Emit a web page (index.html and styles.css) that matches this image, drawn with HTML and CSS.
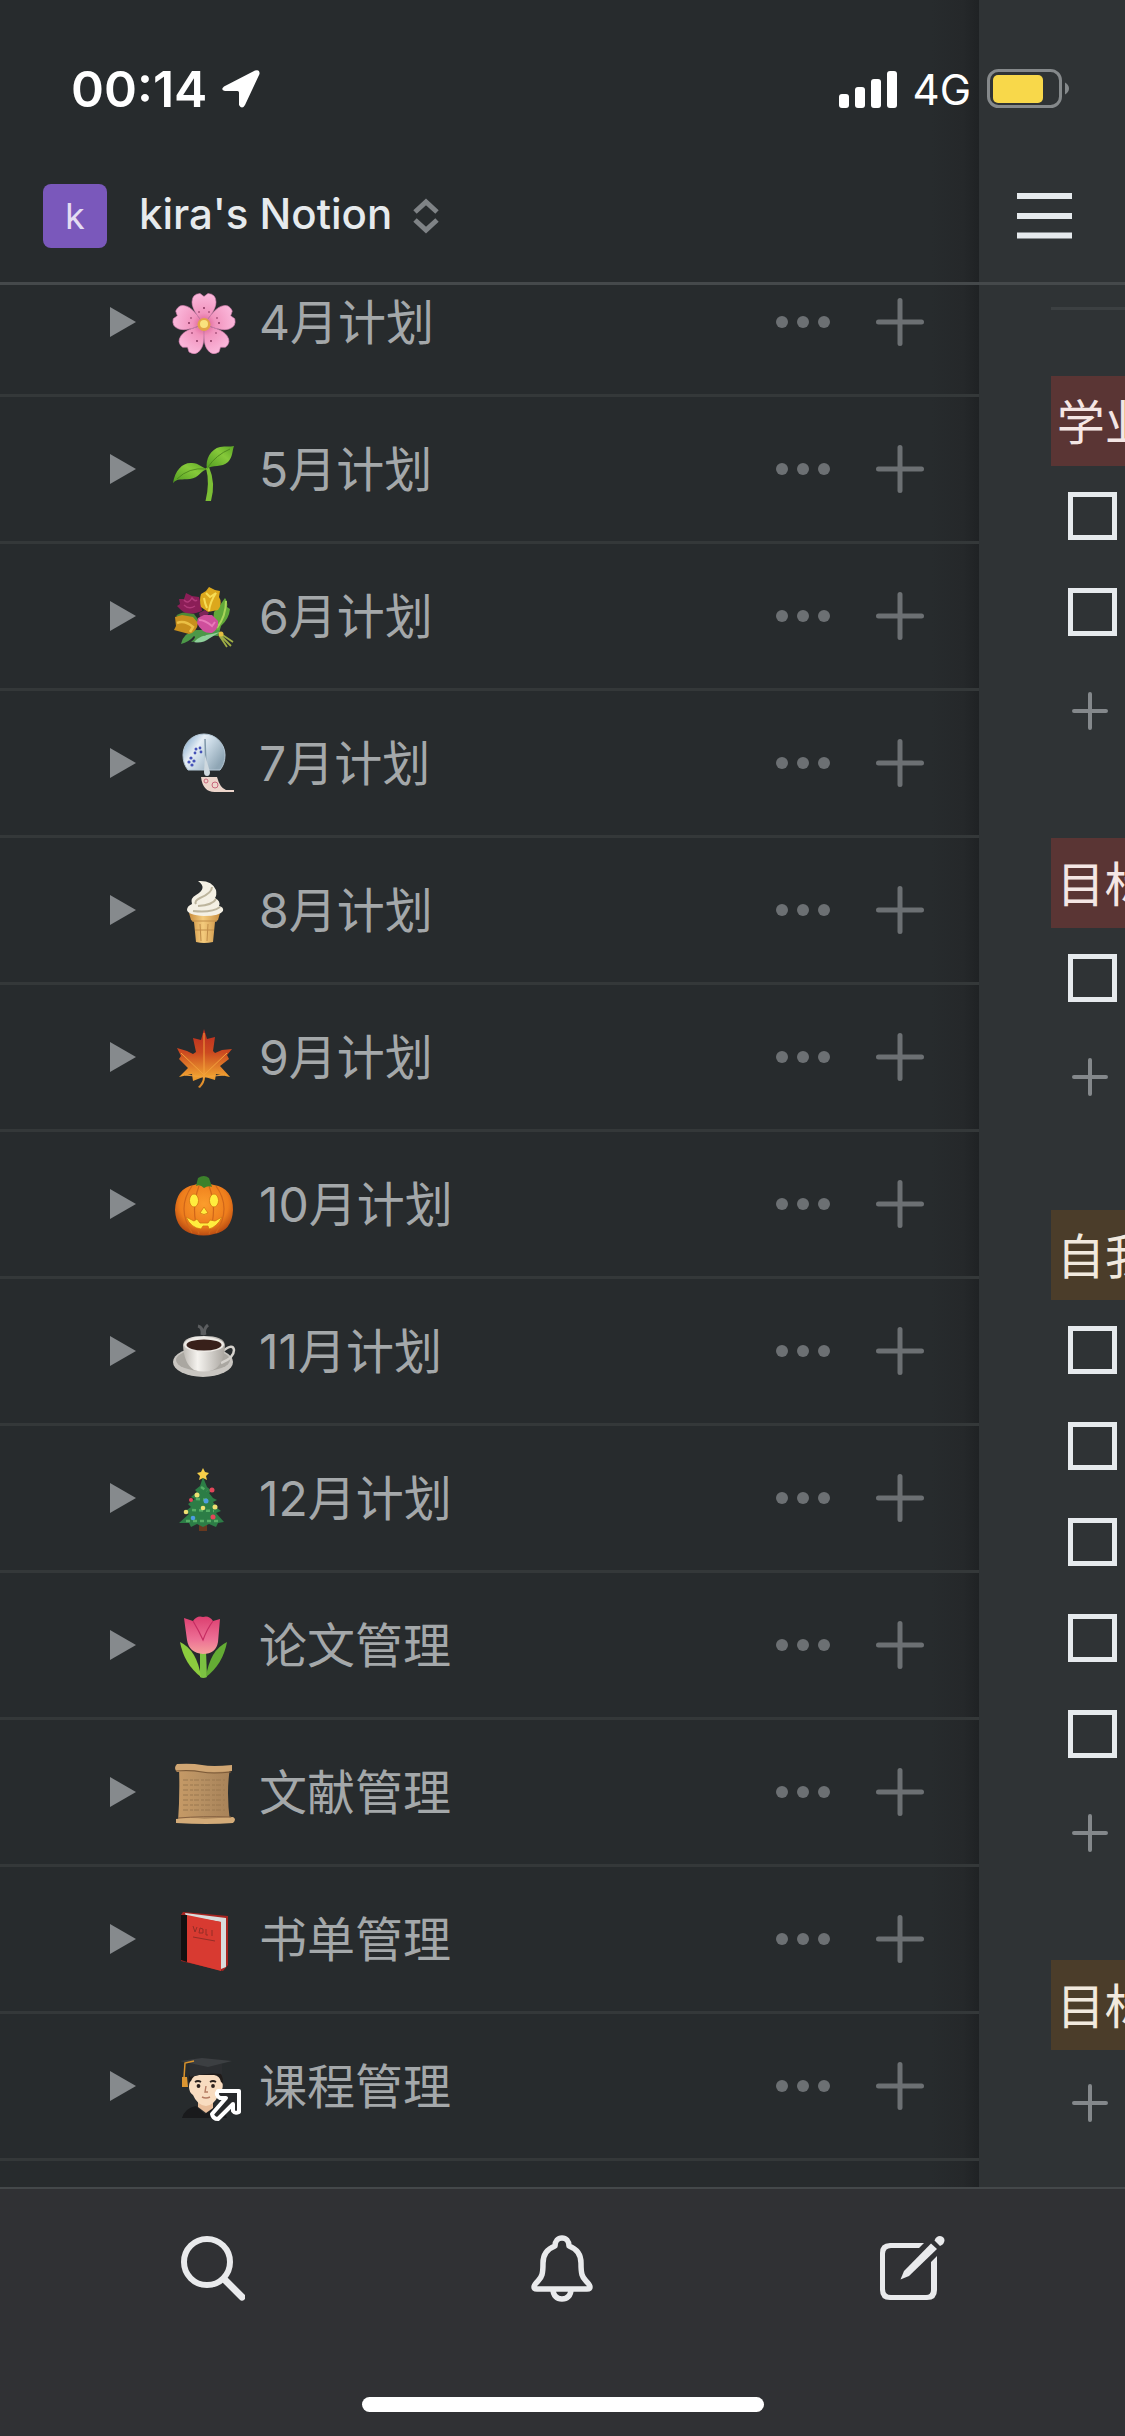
FILE: index.html
```html
<!DOCTYPE html>
<html lang="zh-CN">
<head>
<meta charset="utf-8">
<meta name="viewport" content="width=device-width, initial-scale=1">
<title>kira's Notion</title>
<link rel="stylesheet" href="styles.css">
</head>
<body>
<svg class="defs" aria-hidden="true">
  <defs>
    <symbol id="caret" viewBox="0 0 26 30"><path d="M0 0 26 15 0 30z" fill="#868a8d"/></symbol>
    <symbol id="dots" viewBox="0 0 54 14"><g fill="#6c7073"><circle cx="6" cy="7" r="6"/><circle cx="27" cy="7" r="6"/><circle cx="48" cy="7" r="6"/></g></symbol>
    <symbol id="plus" viewBox="0 0 48 48"><path d="M24 2.500V45.500M2.500 24H45.500" stroke="#6c7073" stroke-width="5" stroke-linecap="round"/></symbol>
    <symbol id="plus-small" viewBox="0 0 36 38"><path d="M18 2V36M2 19H34" stroke="#84888b" stroke-width="4" stroke-linecap="round"/></symbol>
    <radialGradient id="g-petal" gradientUnits="userSpaceOnUse" cx="32" cy="34" r="31"><stop offset="0" stop-color="#d8588f"/><stop offset=".35" stop-color="#f193bd"/><stop offset="1" stop-color="#fbb9dc"/></radialGradient>
    <linearGradient id="g-leaf" x1="0" y1="1" x2="1" y2="0"><stop offset="0" stop-color="#4f9a20"/><stop offset=".6" stop-color="#86c93a"/><stop offset="1" stop-color="#5aa524"/></linearGradient>
    <linearGradient id="g-maple" x1="0" y1="0" x2="0" y2="1"><stop offset="0" stop-color="#b8281f"/><stop offset=".4" stop-color="#cc4a20"/><stop offset=".8" stop-color="#efa030"/><stop offset="1" stop-color="#d9852a"/></linearGradient>
    <linearGradient id="g-dome" x1="0" y1="0" x2="1" y2=".6"><stop offset="0" stop-color="#6e9cc4"/><stop offset=".4" stop-color="#e6eef5"/><stop offset=".6" stop-color="#c8d8e4"/><stop offset="1" stop-color="#8fa6b5"/></linearGradient>
    <linearGradient id="g-cone" x1="0" x2="1"><stop offset="0" stop-color="#c88c3d"/><stop offset=".45" stop-color="#f4cb7d"/><stop offset="1" stop-color="#c98f42"/></linearGradient>
    <radialGradient id="g-pumpkin" cx=".5" cy=".4" r=".6"><stop offset="0" stop-color="#fb9d2c"/><stop offset=".7" stop-color="#ee7d1c"/><stop offset="1" stop-color="#b94c12"/></radialGradient>
    <linearGradient id="g-cup" x1="0" x2="1"><stop offset="0" stop-color="#bdb9b3"/><stop offset=".35" stop-color="#f5f3ef"/><stop offset="1" stop-color="#a9a59f"/></linearGradient>
    <linearGradient id="g-tulip" x1="0" y1="0" x2="0" y2="1"><stop offset="0" stop-color="#dc3f70"/><stop offset=".6" stop-color="#ed6f95"/><stop offset="1" stop-color="#f5a09c"/></linearGradient>
    <linearGradient id="g-scroll" x1="0" x2="1"><stop offset="0" stop-color="#c69a66"/><stop offset=".5" stop-color="#b58f62"/><stop offset="1" stop-color="#a88258"/></linearGradient>
  </defs>
</svg>

<div class="app">
  <div class="status">
    <div class="status-left">
      <span class="clock">00:14</span>
      <svg width="40" height="40" viewBox="0 0 40 40"><path d="M3 17.500 34 1.500Q39 0 38.500 5L24 36Q21 41 18 36V23.500Q18 22 16.500 22H4Q-1 21 3 17.500z" fill="#fff"/></svg>
    </div>
    <div class="status-right">
      <svg width="58" height="38" viewBox="0 0 58 38" fill="#fff"><rect y="24" width="10" height="14" rx="3"/><rect x="16" y="17" width="10" height="21" rx="3"/><rect x="32" y="9" width="10" height="29" rx="3"/><rect x="48" y="1" width="10" height="37" rx="3"/></svg>
      <span class="network">4G</span>
      <svg width="83" height="40" viewBox="0 0 83 40"><rect x="1.500" y="1.500" width="72" height="36" rx="10" fill="none" stroke="#85898b" stroke-width="3"/><rect x="6" y="6" width="50" height="28" rx="5" fill="#f8d84a"/><path d="M78 13.500Q82 16 82 19.500T78 25.500z" fill="#85898b"/></svg>
    </div>
  </div>

  <div class="panes">
    <aside class="sidebar">
      <header class="bar sidebar-bar">
        <button class="workspace" type="button">
          <span class="avatar">k</span>
          <span class="workspace-name">kira's Notion</span>
          <svg width="28" height="36" viewBox="0 0 28 36"><path d="M3 14 14 4 25 14M3 22 14 32 25 22" fill="none" stroke="#7f8386" stroke-width="5"/></svg>
        </button>
      </header>
      <ul class="pages">
        <li class="page">
          <button type="button" aria-label="展开"><svg width="26" height="30"><use href="#caret"/></svg></button>
          <a href="#apr"><svg class="emoji" viewBox="0 0 64 64">
            <g fill="url(#g-petal)" stroke="#d983b4" stroke-width=".6">
              <path d="M32 34C27 27 20 20 20 12Q20 4 28 3.500L32 6.500 36 3.500Q44 4 44 12C44 20 37 27 32 34z"/>
              <path d="M32 34C27 27 20 20 20 12Q20 4 28 3.500L32 6.500 36 3.500Q44 4 44 12C44 20 37 27 32 34z" transform="rotate(72 32 34.500)"/>
              <path d="M32 34C27 27 20 20 20 12Q20 4 28 3.500L32 6.500 36 3.500Q44 4 44 12C44 20 37 27 32 34z" transform="rotate(144 32 34.500)"/>
              <path d="M32 34C27 27 20 20 20 12Q20 4 28 3.500L32 6.500 36 3.500Q44 4 44 12C44 20 37 27 32 34z" transform="rotate(216 32 34.500)"/>
              <path d="M32 34C27 27 20 20 20 12Q20 4 28 3.500L32 6.500 36 3.500Q44 4 44 12C44 20 37 27 32 34z" transform="rotate(288 32 34.500)"/>
            </g>
            <circle cx="32" cy="34.500" r="6.500" fill="#e3a445"/><circle cx="32" cy="34" r="4" fill="#f9e27e"/>
            <g fill="#7d2a52"><circle cx="32" cy="18" r=".9"/><circle cx="27" cy="22" r=".8"/><circle cx="37" cy="22" r=".8"/><circle cx="17" cy="33" r=".9"/><circle cx="19" cy="28" r=".8"/><circle cx="47" cy="33" r=".9"/><circle cx="45" cy="28" r=".8"/><circle cx="25" cy="51" r=".9"/><circle cx="20" cy="43" r=".8"/><circle cx="39" cy="51" r=".9"/><circle cx="44" cy="43" r=".8"/></g>
          </svg><span>4月计划</span></a>
          <button type="button" aria-label="更多"><svg width="54" height="14"><use href="#dots"/></svg></button>
          <button type="button" aria-label="添加"><svg width="48" height="48"><use href="#plus"/></svg></button>
        </li>
        <li class="page">
          <button type="button" aria-label="展开"><svg width="26" height="30"><use href="#caret"/></svg></button>
          <a href="#may"><svg class="emoji" viewBox="0 0 64 64">
            <path d="M34 31Q38 46 33.500 64H39Q44 46 37 30z" fill="#7cbf35"/>
            <path d="M1 46C3 33 11 25 20 26 27 26 30 31 36 32 29 33 27 41 18 42 10 43 5 41 1 46z" fill="url(#g-leaf)"/>
            <path d="M35 32C33 22 39 12 48 10 54 9 58 10 62 9 60 14 61 20 56 25 50 31 40 27 35 32z" fill="url(#g-leaf)"/>
            <path d="M5 42Q17 30 34 32M36 30Q44 18 58 12" fill="none" stroke="#477f1b" stroke-width=".8"/>
          </svg><span>5月计划</span></a>
          <button type="button" aria-label="更多"><svg width="54" height="14"><use href="#dots"/></svg></button>
          <button type="button" aria-label="添加"><svg width="48" height="48"><use href="#plus"/></svg></button>
        </li>
        <li class="page">
          <button type="button" aria-label="展开"><svg width="26" height="30"><use href="#caret"/></svg></button>
          <a href="#jun"><svg class="emoji" viewBox="0 0 64 64">
            <path d="M42 28Q48 22 53 14 56 18 55 23L58 25Q57 35 49 42L47 49 40 45z" fill="#61a83a"/><path d="M54 17Q54 32 45 44" stroke="#a8d55a" stroke-width="2" fill="none"/>
            <path d="M4 32Q10 26 22 30L28 38 20 40z" fill="#4e8a35"/>
            <path d="M9 60Q11 49 24 46L48 46 46 52 33 51Q28 58 19 58 25 53 22 52 17 58 9 60z" fill="#4c9848"/><path d="M22 58Q28 51 40 50L48 48 38 54Q30 60 22 58z" fill="#8fd09b"/>
            <path d="M49 50 61 58M48 51 59 62M47 51 55 63" stroke="#9fae45" stroke-width="1.800"/><circle cx="49" cy="50" r="2.500" fill="#e5c042"/>
            <path d="M5 22 8 20 7 15 12 15 14 9 20 12 27 13 29 21 30 27 24 29Q14 31 9 26z" fill="#8b1e57"/><path d="M12 16Q16 21 20 14 23 18 25 16M12 21Q17 26 23 22" stroke="#b03a78" stroke-width="1.500" fill="none"/>
            <path d="M29 10 34 7 37 3 43 6 48 7 47 13Q51 19 46 26L36 28 29 23Q27 16 29 10z" fill="#dca81d"/><path d="M34 9 38 13 44 9Q38 18 37 27M32 14Q33 20 35 24" stroke="#f7dc55" stroke-width="2" fill="none"/>
            <path d="M27 29 33 26 37 29 33 34 28 33z" fill="#7d2459"/>
            <path d="M3 33 10 31 21 33 26 39Q25 48 17 50L2 46 4 42z" fill="#c88f1d"/><path d="M5 39Q13 36 21 43L18 48" stroke="#eabf45" stroke-width="2.500" fill="none"/>
            <path d="M26 34 32 31 40 31 46 37Q47 45 40 49 30 50 25 39z" fill="#cf4f9c"/><path d="M27 36Q33 36 40 42L43 38" stroke="#e87ab9" stroke-width="2" fill="none"/>
          </svg><span>6月计划</span></a>
          <button type="button" aria-label="更多"><svg width="54" height="14"><use href="#dots"/></svg></button>
          <button type="button" aria-label="添加"><svg width="48" height="48"><use href="#plus"/></svg></button>
        </li>
        <li class="page">
          <button type="button" aria-label="展开"><svg width="26" height="30"><use href="#caret"/></svg></button>
          <a href="#jul"><svg class="emoji" viewBox="0 0 64 64">
            <path d="M16 39Q11 33 11 24A21 21 0 0 1 53 24Q53 33 48 39z" fill="url(#g-dome)" stroke="#b8cbd9" stroke-width="1"/>
            <path d="M33 8 34 36" stroke="#7f97a8" stroke-width="1.500"/><path d="M33 24 38 41Q38 45 35 45T32 41z" fill="#cfd9df"/>
            <g fill="#4452b8"><circle cx="19" cy="27" r="1.600"/><circle cx="22" cy="30" r="1.600"/><circle cx="17" cy="31" r="1.600"/><circle cx="20" cy="34" r="1.600"/><circle cx="24" cy="18" r="1.500"/><circle cx="28" cy="17" r="1.400"/><circle cx="23" cy="22" r="1.400"/><circle cx="29" cy="21" r="1.400"/></g>
            <path d="M29 46H45Q48 57 54 59L62 59V61H44Q31 62 29 46z" fill="#ecd5cb"/><g fill="none" stroke="#c9677c"><circle cx="34" cy="50" r="2"/><circle cx="43" cy="54" r="3"/></g>
          </svg><span>7月计划</span></a>
          <button type="button" aria-label="更多"><svg width="54" height="14"><use href="#dots"/></svg></button>
          <button type="button" aria-label="添加"><svg width="48" height="48"><use href="#plus"/></svg></button>
        </li>
        <li class="page">
          <button type="button" aria-label="展开"><svg width="26" height="30"><use href="#caret"/></svg></button>
          <a href="#aug"><svg class="emoji" viewBox="0 0 64 64">
            <path d="M17 35H48L46 42 43 44 41 64Q32 66 24 64L22 44 19 42z" fill="url(#g-cone)"/><path d="M20 43H45M28 46 29 63M36 46 35 63M23 52H42" stroke="#c08c48" stroke-width="1" fill="none"/>
            <path d="M26 3Q40 2 44 12 45 17 43 20 49 23 47 28 52 29 51 33 48 38 32 38 16 37 15 32 15 28 20 26 18 20 24 17 36 10 26 3z" fill="#f4f0e4"/>
            <path d="M40 9Q40 15 28 20 22 23 24 26M44 21Q41 27 26 28M48 29Q40 35 21 33" stroke="#bdb59d" stroke-width="2" fill="none"/>
          </svg><span>8月计划</span></a>
          <button type="button" aria-label="更多"><svg width="54" height="14"><use href="#dots"/></svg></button>
          <button type="button" aria-label="添加"><svg width="48" height="48"><use href="#plus"/></svg></button>
        </li>
        <li class="page">
          <button type="button" aria-label="展开"><svg width="26" height="30"><use href="#caret"/></svg></button>
          <a href="#sep"><svg class="emoji" viewBox="0 0 64 64">
            <path d="M32 4 35 14 43 12 41 26 43 28 50 25 60 24 55 30 57 34 48 41 58 52 44 49 43 55 33 52Q33 58 28 63L26 62Q31 57 31 52L21 56 20 49 7 52 16 43 7 34 9 31 5 23 15 26 21 29 24 27 21 13 29 15z" fill="url(#g-maple)"/>
            <path d="M32 8 32 53M32 50 9 28M32 50 55 28M32 52 13 50M32 52 52 50" stroke="#f3a13c" stroke-width="1" fill="none"/>
          </svg><span>9月计划</span></a>
          <button type="button" aria-label="更多"><svg width="54" height="14"><use href="#dots"/></svg></button>
          <button type="button" aria-label="添加"><svg width="48" height="48"><use href="#plus"/></svg></button>
        </li>
        <li class="page">
          <button type="button" aria-label="展开"><svg width="26" height="30"><use href="#caret"/></svg></button>
          <a href="#oct"><svg class="emoji" viewBox="0 0 64 64">
            <path d="M22 13Q30 9 42 13 61 16 61 38 60 59 42 62 32 65 21 62 4 58 3 38 4 16 22 13z" fill="url(#g-pumpkin)"/>
            <path d="M20 14Q4 36 20 61M27 14Q18 38 27 62M37 14Q46 38 37 62M44 14Q60 36 44 61" stroke="#d0661a" stroke-width="1.200" fill="none"/>
            <path d="M24 14 26 6Q32 2 37 6L40 15Q36 13 32 16 28 12 24 14z" fill="#3c812b"/>
            <g fill="#ffed3e" stroke="#d27512" stroke-width=".8"><ellipse cx="22" cy="28.500" rx="4.500" ry="6.500"/><ellipse cx="42" cy="28.500" rx="4.500" ry="6.500"/><path d="M32 35 36 41Q32 44 28 41zM14 45 22 49 25 47 28 51 36 51 38 48 43 49 50 45Q45 55 37 57L36 54 31 54 29 57Q19 56 14 45z"/></g>
          </svg><span>10月计划</span></a>
          <button type="button" aria-label="更多"><svg width="54" height="14"><use href="#dots"/></svg></button>
          <button type="button" aria-label="添加"><svg width="48" height="48"><use href="#plus"/></svg></button>
        </li>
        <li class="page">
          <button type="button" aria-label="展开"><svg width="26" height="30"><use href="#caret"/></svg></button>
          <a href="#nov"><svg class="emoji" viewBox="0 0 64 64">
            <path d="M26 7Q31 8 30 16M36 6Q31 10 33 16" stroke="#5b5d5f" stroke-width="3" fill="none"/>
            <ellipse cx="31" cy="43" rx="30" ry="15" fill="#c9c6c1"/><ellipse cx="31" cy="41" rx="27" ry="11" fill="#aaa7a1"/>
            <path d="M51 32Q61 24 62 31 62 39 49 44" fill="none" stroke="#d5d2cd" stroke-width="2.500"/>
            <path d="M11 26Q12 17 32 17T53 26Q52 46 41 51 32 54 22 51 12 45 11 26z" fill="url(#g-cup)"/><ellipse cx="32" cy="25.500" rx="20" ry="7.500" fill="#edeae5"/><ellipse cx="32" cy="26" rx="17.500" ry="5.500" fill="#38201a"/>
          </svg><span>11月计划</span></a>
          <button type="button" aria-label="更多"><svg width="54" height="14"><use href="#dots"/></svg></button>
          <button type="button" aria-label="添加"><svg width="48" height="48"><use href="#plus"/></svg></button>
        </li>
        <li class="page">
          <button type="button" aria-label="展开"><svg width="26" height="30"><use href="#caret"/></svg></button>
          <a href="#dec"><svg class="emoji" viewBox="0 0 64 64">
            <path d="M27 58H35V65H27z" fill="#67381f"/>
            <path d="M31 11 35 21 40 25 37 27 41 32 45 34 41 36 45 42 49 45 44 47 52 56 46 57 44 61 37 58 31 61 25 58 19 61 17 57 7 57 17 48 12 46 19 41 16 38 23 33 19 31 25 26 23 24 28 20z" fill="#2c7d46"/><path d="M29 21 35 25M24 33 38 34M20 44 42 45M14 55 46 55" stroke="#56ad65" stroke-width="2.500" stroke-dasharray="4 3"/>
            <path d="M31 2 33 6 37 7 34 10 35 14 31 12 27 14 28 10 25 7 29 6z" fill="#f6cf49"/>
            <g fill="#e2475a"><circle cx="40" cy="24" r="2.500"/><circle cx="41" cy="51" r="2.500"/><circle cx="19" cy="34" r="2"/></g><g fill="#eedf72"><circle cx="25" cy="29" r="2.500"/><circle cx="43" cy="41" r="2.500"/><circle cx="31" cy="42" r="2.300"/><circle cx="14" cy="46" r="2.300"/></g><g fill="#4d9de0"><circle cx="34" cy="35" r="2.500"/><circle cx="21" cy="52" r="2.300"/></g>
          </svg><span>12月计划</span></a>
          <button type="button" aria-label="更多"><svg width="54" height="14"><use href="#dots"/></svg></button>
          <button type="button" aria-label="添加"><svg width="48" height="48"><use href="#plus"/></svg></button>
        </li>
        <li class="page">
          <button type="button" aria-label="展开"><svg width="26" height="30"><use href="#caret"/></svg></button>
          <a href="#thesis"><svg class="emoji" viewBox="0 0 64 64">
            <path d="M28 38H34L35 64Q31 66 28 64z" fill="#7cc142"/><path d="M8 29Q25 37 29 64 12 51 8 29z" fill="#8ccc3e"/><path d="M55 29Q38 37 34 64 51 51 55 29z" fill="#64ab34"/>
            <path d="M12 5 21 8Q25 2 31 4 37 2 41 8L48 6 46 29Q44 41 31 41 17 40 15 27z" fill="url(#g-tulip)"/><path d="M21 8Q27 18 31 27 35 16 41 8" fill="none" stroke="#c52c62" stroke-width="1.200"/>
          </svg><span>论文管理</span></a>
          <button type="button" aria-label="更多"><svg width="54" height="14"><use href="#dots"/></svg></button>
          <button type="button" aria-label="添加"><svg width="48" height="48"><use href="#plus"/></svg></button>
        </li>
        <li class="page">
          <button type="button" aria-label="展开"><svg width="26" height="30"><use href="#caret"/></svg></button>
          <a href="#papers"><svg class="emoji" viewBox="0 0 64 64">
            <path d="M7 8H58Q54 32 58 62H6Q8 34 7 8z" fill="url(#g-scroll)"/>
            <path d="M5 4Q20 3 30 5T60 5V11Q40 13 26 11L5 12Q1 8 5 4z" fill="#d0a673"/><path d="M4 11Q20 10 30 12T59 12" stroke="#7c5a38" stroke-width="1.200" fill="none"/>
            <path d="M4 59Q20 57 32 59L61 57Q65 59 61 63 36 65 4 63z" fill="#d3ab78"/><path d="M6 58Q30 56 59 57" stroke="#866141" stroke-width="1" fill="none"/>
            <path d="M11 20H53M11 25H52M11 30H53M11 35H52M11 40H53M11 45H52M11 50H53" stroke="#9a7850" stroke-width="1" stroke-dasharray="5 2 3 1"/>
          </svg><span>文献管理</span></a>
          <button type="button" aria-label="更多"><svg width="54" height="14"><use href="#dots"/></svg></button>
          <button type="button" aria-label="添加"><svg width="48" height="48"><use href="#plus"/></svg></button>
        </li>
        <li class="page">
          <button type="button" aria-label="展开"><svg width="26" height="30"><use href="#caret"/></svg></button>
          <a href="#books"><svg class="emoji" viewBox="0 0 64 64">
            <path d="M11 5 56 9V58L51 64 9 54V8z" fill="#a72420"/><path d="M13 6 54 11V60L49 62V15L14 9z" fill="#d9dcdc"/><path d="M9 8 15 8V55L9 53z" fill="#111"/><path d="M15 8 49 15V64L15 55z" fill="#d83a31"/>
            <path d="M21 19 23 25 25 20M28 21 31 22 31 26 27 26zM34 22V28H36M40 23V29M21 30 43 34" stroke="#942d27" stroke-width="1" fill="none"/>
          </svg><span>书单管理</span></a>
          <button type="button" aria-label="更多"><svg width="54" height="14"><use href="#dots"/></svg></button>
          <button type="button" aria-label="添加"><svg width="48" height="48"><use href="#plus"/></svg></button>
        </li>
        <li class="page">
          <button type="button" aria-label="展开"><svg width="26" height="30"><use href="#caret"/></svg></button>
          <a href="#courses"><svg class="emoji" viewBox="0 0 64 64">
            <path d="M10 64Q13 54 24 52L33 60 44 52Q53 55 55 64z" fill="#191a1c"/><path d="M26 47H41V54L34 59 26 53z" fill="#e8bd9a"/>
            <path d="M17 28Q15 14 33 14T51 28L49 36 18 36z" fill="#201b19"/><path d="M19 27Q21 21 27 21H42Q48 22 49 28 52 29 50 36 47 40 46 42 42 51 34 52 25 51 21 41 17 38 17 33 17 28 19 27z" fill="#f8dcc0"/>
            <path d="M23 28Q26 26 29 28M38 28Q41 26 44 28" stroke="#2a211d" stroke-width="1.800" fill="none"/><circle cx="26.500" cy="32" r="1.900" fill="#2c211e"/><circle cx="41" cy="32" r="1.900" fill="#2c211e"/><path d="M34 32 33 38H36M30 43Q34 45 38 43" stroke="#b57c63" stroke-width="1.400" fill="none"/>
            <path d="M17 10H50V20Q34 18 18 23z" fill="#2c2e31"/><path d="M8 7 30 4 60 7 36 13z" fill="#3c3f42"/><path d="M22 7 13 9 12 24" fill="none" stroke="#d9932c" stroke-width="1.500"/><path d="M10 23H15L16 33H10z" fill="#dc9632"/>
            <path d="M46 37H67V58Q63 60 61 57V50L46 65Q41 65 40 60L54 44H48Q43 41 46 37z" fill="#27292b" stroke="#fff" stroke-width="4" stroke-linejoin="round"/>
          </svg><span>课程管理</span></a>
          <button type="button" aria-label="更多"><svg width="54" height="14"><use href="#dots"/></svg></button>
          <button type="button" aria-label="添加"><svg width="48" height="48"><use href="#plus"/></svg></button>
        </li>
      </ul>
    </aside>

    <main class="content">
      <header class="bar content-bar">
        <button type="button" aria-label="菜单"><svg width="56" height="48" viewBox="0 0 56 48"><path d="M0 4H55M0 24H55M0 43.500H55" stroke="#e6eaed" stroke-width="6"/></svg></button>
      </header>
      <div class="board">
        <hr>
        <section>
          <h2 class="tag red">学业</h2>
          <input type="checkbox" aria-label="学业 1">
          <input type="checkbox" aria-label="学业 2">
          <button type="button" aria-label="添加"><svg width="36" height="38"><use href="#plus-small"/></svg></button>
        </section>
        <section>
          <h2 class="tag red">目标</h2>
          <input type="checkbox" aria-label="目标 1">
          <button type="button" aria-label="添加"><svg width="36" height="38"><use href="#plus-small"/></svg></button>
        </section>
        <section class="new-area">
          <h2 class="tag brown">自我</h2>
          <input type="checkbox" aria-label="自我 1">
          <input type="checkbox" aria-label="自我 2">
          <input type="checkbox" aria-label="自我 3">
          <input type="checkbox" aria-label="自我 4">
          <input type="checkbox" aria-label="自我 5">
          <button type="button" aria-label="添加"><svg width="36" height="38"><use href="#plus-small"/></svg></button>
        </section>
        <section>
          <h2 class="tag brown">目标</h2>
          <button type="button" aria-label="添加"><svg width="36" height="38"><use href="#plus-small"/></svg></button>
        </section>
      </div>
    </main>
  </div>

  <footer class="toolbar">
    <nav>
      <button type="button" aria-label="搜索"><svg width="64" height="68" viewBox="0 0 64 68" fill="none" stroke="#e9eaec"><circle cx="26" cy="27" r="23" stroke-width="6"/><path d="M43 44 61 62" stroke-width="7" stroke-linecap="round"/></svg></button>
      <button type="button" aria-label="通知"><svg width="64" height="68" viewBox="0 0 64 68" fill="none" stroke="#e9eaec" stroke-width="5.500" stroke-linejoin="round"><path d="M25 11C25 6 28 3 32 3S39 6 39 11C47 14 51 20 51 28C51 39 52 42 56 46C59 49 60 50 60 52Q60 54 57 54H7Q4 54 4 52C4 50 5 49 8 46C12 42 13 39 13 28C13 20 17 14 25 11zM23 54C23 61 27 64 32 64S41 61 41 54"/></svg></button>
      <button type="button" aria-label="新建"><svg width="66" height="68" viewBox="0 0 66 68"><path d="M45 8H11Q1 8 1 18V55Q1 65 11 65H48Q58 65 58 55V21L52 27V55Q52 60 47 60H12Q6 60 6 54V19Q6 13 12 13H40z" fill="#e9eaec"/><path d="M21.500 44.500 25 36 52 8.500 58 14 30 41z" fill="#e9eaec"/><path d="M55.500 5.500Q57 1 61 1 65.500 1.500 65.500 5.500 65 9.500 61 11z" fill="#e9eaec"/></svg></button>
    </nav>
    <div class="home"></div>
  </footer>
</div>
</body>
</html>
```
FILE: styles.css
```css
* {
  box-sizing: border-box;
}

body {
  margin: 0;
  background: #303134;
  color: #a4a8aa;
  font-family: Inter, "Noto Sans CJK SC", sans-serif;
  font-size: 48px;
}

button {
  display: flex;
  align-items: center;
  padding: 0;
  border: 0;
  background: none;
  color: inherit;
  font: inherit;
}

svg {
  display: block;
  flex: none;
}

.defs {
  position: absolute;
  width: 0;
  height: 0;
}

.app {
  position: relative;
  display: flex;
  flex-direction: column;
  min-height: 100vh;
  overflow: hidden;
}

/* System status bar, drawn over both panes */
.status {
  position: absolute;
  z-index: 2;
  top: 60px;
  left: 0;
  right: 0;
  display: flex;
  justify-content: space-between;
  align-items: center;
  height: 58px;
  padding: 0 55px 0 71px;
  color: #fff;
}

.status-left,
.status-right {
  display: flex;
  align-items: center;
  gap: 16px;
}

.status-left {
  gap: 14px;
}

.clock {
  font-size: 50px;
  font-weight: 600;
}

.network {
  font-size: 42px;
}

.panes {
  flex: 1;
  display: grid;
  grid-template-columns: 87% 1fr;
}

.sidebar {
  min-width: 0;
  overflow: hidden;
  background: linear-gradient(to left, #1f2224, #25282a 16px, #272b2d 48px);
}

.content {
  min-width: 0;
  overflow: hidden;
  background: #2f3335;
}

.bar {
  display: flex;
  align-items: center;
  height: 285px;
  border-bottom: 3px solid #45494b;
}

.sidebar-bar {
  position: relative;
  background: linear-gradient(to left, #1f2224, #25282a 16px, #272b2d 48px);
  padding: 150px 43px 0;
}

.content-bar {
  padding: 150px 38px 0;
}

.workspace {
  gap: 32px;
  color: #e6eaed;
  font-size: 42px;
  font-weight: 500;
}

.workspace-name {
  padding-bottom: 6px;
}

.workspace svg {
  margin-left: -12px;
}

.avatar {
  display: grid;
  place-items: center;
  width: 64px;
  height: 64px;
  border-radius: 8px;
  background: #7a58bb;
  color: #e4dcf2;
  font-size: 36px;
  font-weight: 400;
}

/* The list is scrolled, so its first row slips under the bar */
.pages {
  margin: -35px 0 0;
  padding: 0;
  list-style: none;
}

.page {
  display: flex;
  align-items: center;
  gap: 46px;
  height: 147px;
  padding: 0 55px 0 110px;
  border-bottom: 3px solid #343839;
}

.page a {
  flex: 1;
  display: flex;
  align-items: center;
  gap: 23px;
  margin-left: -10px;
  color: inherit;
  text-decoration: none;
  white-space: nowrap;
}

.page span {
  padding-bottom: 6px;
}

.emoji {
  width: 64px;
  height: 64px;
  overflow: visible;
}

.board {
  padding: 22px 0 0 72px;
}

.board hr {
  height: 3px;
  margin: 0 0 66px;
  border: 0;
  background: #3c4042;
}

.board section {
  margin-bottom: 76px;
}

.board section:last-child {
  margin-bottom: 0;
}

.board .new-area {
  margin-top: 82px;
}

.tag {
  height: 90px;
  margin: 0 0 2px;
  padding: 2px 0 0 6px;
  font-size: 48px;
  font-weight: 400;
  line-height: 90px;
  white-space: nowrap;
}

.red {
  background: #5a3534;
  color: #f4e6e4;
}

.brown {
  background: #4b3d2a;
  color: #f1e9de;
}

.board input {
  appearance: none;
  display: block;
  width: 49px;
  height: 48px;
  margin: 26px 0 48px 17px;
  border: 5px solid #e6eaed;
}

.board input + input {
  margin-top: 0;
}

.board section button {
  height: 102px;
  margin-left: 21px;
}

.board input + button {
  margin-top: -24px;
}

.toolbar {
  display: flex;
  flex-direction: column;
  align-items: center;
  justify-content: space-between;
  height: 249px;
  padding: 46px 38px 24px;
  border-top: 2px solid #44484a;
  background: #303134;
}

.toolbar nav {
  align-self: stretch;
  display: grid;
  grid-template-columns: repeat(3, 1fr);
  justify-items: center;
}

.home {
  width: 402px;
  height: 15px;
  border-radius: 8px;
  background: #fff;
}
```
